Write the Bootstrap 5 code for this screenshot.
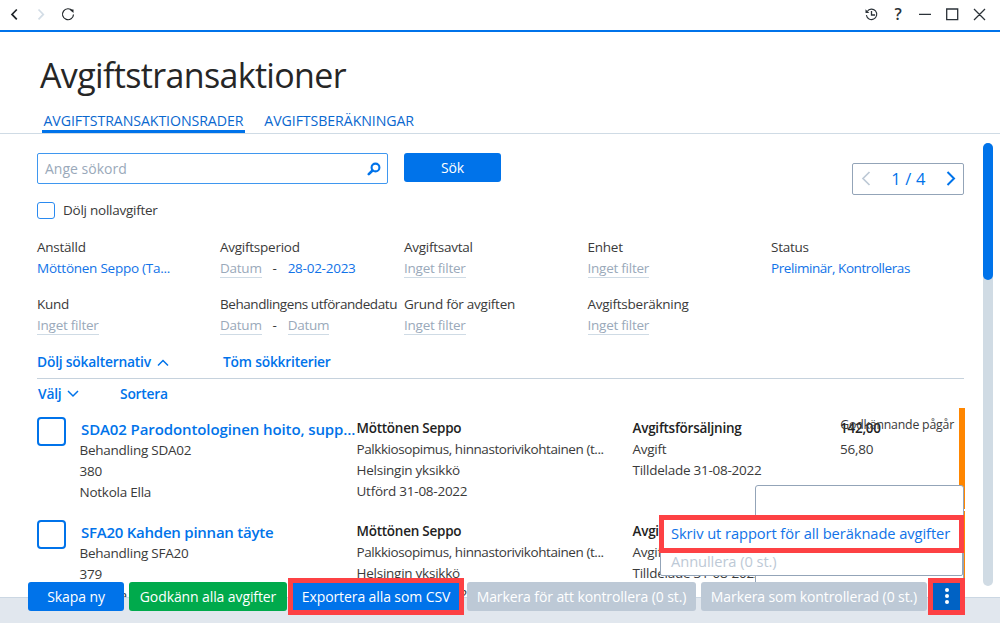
<!DOCTYPE html>
<html lang="sv">
<head>
<meta charset="utf-8">
<meta name="viewport" content="width=device-width, initial-scale=1">
<title>Avgiftstransaktioner</title>
<link href="https://cdn.jsdelivr.net/npm/bootstrap@5.3.0/dist/css/bootstrap.min.css" rel="stylesheet">
<script src="https://cdn.jsdelivr.net/npm/bootstrap@5.3.0/dist/js/bootstrap.bundle.min.js" defer></script>
<style>
:root{--blue:#0073ea;--grey:#9aa9ba;--line:#cfdbe5;--red:#fd4144}
body{font-family:"Open Sans","Noto Sans",sans-serif;font-size:13.5px;letter-spacing:-.25px;line-height:20px;color:#3a3a3a;width:1000px;height:623px;overflow:hidden;background:#fff}
.titlebar{height:32px;border-bottom:2px solid var(--blue);padding:0 13px 2px 7px}
.titlebar svg{display:block}
h1{font-size:34px;line-height:44px;color:#262626;font-weight:400;margin:21px 0 1px 40px;letter-spacing:-.65px}
.tabs{border-bottom:1px solid var(--line);height:36px;padding-left:42px;gap:18px}
.tabs .nav-link{color:#0a68cf;padding:11px 1.5px 0;height:35px;line-height:23px;font-size:14.2px;letter-spacing:-.1px;border-bottom:3px solid transparent;white-space:nowrap}
.tabs .nav-link.active{border-color:var(--blue)}
.page-area{height:463px;overflow:hidden;position:relative;padding:19px 36px 0 37px}
.search{width:351px;height:31px;border:1px solid #3f97ef!important;border-radius:2px;padding:0 6px 0 7px;font-size:14px;letter-spacing:0;color:var(--grey)}
.btn{--bs-btn-border-radius:3px;--bs-btn-padding-y:0;--bs-btn-padding-x:0;--bs-btn-font-size:14px;height:29px;line-height:29px;border:0;white-space:nowrap;letter-spacing:-.1px}
.btn-blue,.btn-blue:hover{background:var(--blue);color:#fff}
.pager{width:112px;height:32px;margin-top:10px;border:1px solid #93a4b8;border-radius:2px;color:var(--blue);font-size:16.5px;letter-spacing:.2px;padding:0 6px 0 7px}
.box-sm{width:18px;height:17px;border:1.5px solid #2a8af0;border-radius:3px}
.box-lg{width:29px;height:29px;border:2px solid var(--blue);border-radius:4px;margin:9px 14px 0 0;flex:none}
.filters{display:grid;grid-template-columns:183px 184px 183.5px 183.5px 1fr;row-gap:15px;margin-top:17px}
.filters>div{white-space:nowrap}
.tight{letter-spacing:-.43px}
.val{height:22px;display:flex;line-height:23px;color:#1173e8}
.empty{color:var(--grey);border-bottom:1px solid var(--line);height:21px}
.dash{width:26px;text-align:center;color:#3a3a3a}
.act{color:var(--blue);font-weight:600;font-size:13.8px;letter-spacing:-.2px}
.options{height:43px;padding-top:16px;border-bottom:1px solid #c6d2dd}
.item{height:103px;position:relative;display:grid;grid-template-columns:42.5px 277px 276px 207.5px 1fr;white-space:nowrap;line-height:21px}
.item::after{content:"";position:absolute;right:-1px;top:0;width:6px;height:101px;background:#ff8600}
.item .info{padding-top:10px}
.item .ttl{color:var(--blue);font-weight:600;font-size:15px;line-height:22px;height:21.5px;padding-left:1.5px;letter-spacing:-.24px}
.item .ttl.wide{letter-spacing:-.1px}
.item b{color:#222;font-weight:600;display:block}
.state{position:absolute;right:10px;top:6px;font-size:12.3px;letter-spacing:-.2px}
.scroll{position:absolute;left:983px;top:9px;width:10px;height:443px;border-radius:5px;background:#d0dbe4}
.scroll div{height:137px;border-radius:5px;background:var(--blue)}
.bar{height:27px;background:#e1e7ee;border-top:1px solid #cbd7e3;position:relative;z-index:3;padding-left:28px}
.bar .btn{margin-top:-16px}
.btn-green,.btn-green:hover{background:#00aa4c;color:#fff}
.bar .btn-off{background:#bdc9d6;color:#fff;opacity:1}
.bar .framed{height:37px;margin:-20px 0 0 1px;border:5px solid var(--red);border-radius:0;line-height:27px}
.pop{position:absolute;z-index:2;background:#fff;border:1px solid #93a4b8}
.p1{left:755px;top:351px;width:209px;height:120px;border-width:1.5px;border-radius:3px}
.p2{left:660px;top:381px;width:303px;height:61px;border-radius:2px;font-size:14.7px;letter-spacing:-.08px;white-space:nowrap}
.hot{margin:-1px -2px 0;height:38px;border:5px solid var(--red);background:#fff;color:#1173e8;padding:0 7px;line-height:26px}
.dim{color:#bdc9d6;padding-left:10px;line-height:17px}
</style>
</head>
<body>
<header class="titlebar d-flex align-items-center justify-content-between">
  <svg width="80" height="28" viewBox="7 0 80 28" fill="none" stroke="#1f2428" stroke-width="1.700"><path d="M16.800 9.500 12 14.400l4.800 4.900"/><path d="m38.500 9.500 4.800 4.900-4.800 4.900" stroke="#d3dde6"/><path d="M72.300 10.800a5.500 5.500 0 1 0 1.200 3.700" stroke-width="1.200"/><path d="M69.500 9.500h4V13z" fill="#1f2428" stroke="none"/></svg>
  <svg width="124" height="28" viewBox="863 0 124 28" fill="none" stroke="#2b3238" stroke-width="1.300"><path d="M867.200 11.500a5.200 5.200 0 1 1-.8 3.600" stroke-width="1.100"/><path d="M865.500 9.300v3.800h3.800z" fill="#2b3238" stroke="none"/><path d="M871.500 11v4h3.600"/><text x="894.500" y="20" font-size="16" font-weight="600" fill="#2b3238" stroke="none">?</text><path d="M919 14.400h12M946.700 9h11v10.600h-11zM974 9l11 11M985 9l-11 11"/></svg>
</header>
<h1>Avgiftstransaktioner</h1>
<nav class="nav tabs flex-nowrap">
  <a class="nav-link active">AVGIFTSTRANSAKTIONSRADER</a>
  <a class="nav-link">AVGIFTSBERÄKNINGAR</a>
</nav>
<main class="page-area">
  <div class="d-flex align-items-start">
    <div class="search d-flex align-items-center justify-content-between"><span>Ange sökord</span>
      <svg width="15" height="15" viewBox="0 0 15 15" fill="none" stroke="#0073ea"><circle cx="9.500" cy="6.500" r="3.900" stroke-width="2.100"/><path d="M6.500 9.500 2.800 13.200" stroke-width="2.600" stroke-linecap="round"/></svg>
    </div>
    <button class="btn btn-blue ms-3" style="width:97px">Sök</button>
    <div class="pager d-flex align-items-center justify-content-between ms-auto">
      <svg width="12" height="16" viewBox="0 0 12 16" fill="none" stroke="#bdc9d6" stroke-width="1.700"><path d="M9.500 1 3 7.500l6.500 6.500"/></svg><span>1 / 4</span>
      <svg width="12" height="16" viewBox="0 0 12 16" fill="none" stroke="#0073ea" stroke-width="2"><path d="M2.500 1 9 7.500l-6.500 6.500"/></svg>
    </div>
  </div>
  <div class="d-flex align-items-center" style="height:20px;margin-top:5px"><span class="box-sm me-2"></span><span>Dölj nollavgifter</span></div>
  <section class="filters">
    <div>Anställd<div class="val">Möttönen Seppo (Ta...</div></div>
    <div>Avgiftsperiod<div class="val"><span class="empty">Datum</span><span class="dash">-</span>28-02-2023</div></div>
    <div>Avgiftsavtal<div class="val"><span class="empty">Inget filter</span></div></div>
    <div>Enhet<div class="val"><span class="empty">Inget filter</span></div></div>
    <div>Status<div class="val tight">Preliminär, Kontrolleras</div></div>
    <div>Kund<div class="val"><span class="empty">Inget filter</span></div></div>
    <div><span class="tight">Behandlingens utförandedatu</span><div class="val"><span class="empty">Datum</span><span class="dash">-</span><span class="empty">Datum</span></div></div>
    <div>Grund för avgiften<div class="val"><span class="empty">Inget filter</span></div></div>
    <div>Avgiftsberäkning<div class="val"><span class="empty">Inget filter</span></div></div>
  </section>
  <div class="act options d-flex"><span style="width:186px">Dölj sökalternativ <svg width="12" height="9" viewBox="0 0 12 9" fill="none" stroke="#0073ea" stroke-width="1.500" style="margin-left:3px"><path d="m1 6.500 5-5 5 5"/></svg></span><span>Töm sökkriterier</span></div>
  <div class="act d-flex" style="height:29px;padding:5px 0 0 1px"><span style="width:82px">Välj <svg width="12" height="10" viewBox="0 0 12 10" fill="none" stroke="#0073ea" stroke-width="1.500" style="margin-left:2px"><path d="m1 1 5 5 5-5"/></svg></span><span>Sortera</span></div>
  <article class="item">
    <span class="box-lg"></span>
    <div class="info"><div class="ttl wide">SDA02 Parodontologinen hoito, supp...</div>Behandling SDA02<br>380<br>Notkola Ella</div>
    <div class="info"><b>Möttönen Seppo</b><span class="tight">Palkkiosopimus, hinnastorivikohtainen (t...</span><br>Helsingin yksikkö<br>Utförd 31-08-2022</div>
    <div class="info"><b>Avgiftsförsäljning</b>Avgift<br>Tilldelade 31-08-2022</div>
    <div class="info"><b>142,00</b>56,80</div>
    <span class="state">Godkännande pågår</span>
  </article>
  <article class="item">
    <span class="box-lg"></span>
    <div class="info"><div class="ttl">SFA20 Kahden pinnan täyte</div>Behandling SFA20<br>379<br>Notkola Ella</div>
    <div class="info"><b>Möttönen Seppo</b><span class="tight">Palkkiosopimus, hinnastorivikohtainen (t...</span><br>Helsingin yksikkö<br>Utförd 31-08-2022</div>
    <div class="info"><b>Avgiftsförsäljning</b>Avgift<br>Tilldelade 31-08-2022</div>
  </article>
  <div class="scroll"><div></div></div>
  <div class="pop p1"></div>
  <div class="pop p2"><div class="hot">Skriv ut rapport för all beräknade avgifter</div><div class="dim">Annullera (0 st.)</div></div>
</main>
<footer class="bar d-flex align-items-start">
  <button class="btn btn-blue" style="width:96px">Skapa ny</button>
  <button class="btn btn-green" style="width:158px;margin-left:5px">Godkänn alla avgifter</button>
  <button class="btn btn-blue framed" style="width:176px">Exportera alla som CSV</button>
  <button class="btn btn-off" style="width:229px;margin-left:3px" disabled>Markera för att kontrollera (0 st.)</button>
  <button class="btn btn-off" style="width:226px;margin-left:5px" disabled>Markera som kontrollerad (0 st.)</button>
  <button class="btn framed" style="width:37px;background:#0062c4" aria-label="Mer"><svg class="d-block mx-auto" width="6" height="20" viewBox="0 0 6 20" fill="#fff"><circle cx="3" cy="3" r="2"/><circle cx="3" cy="9" r="2"/><circle cx="3" cy="15" r="2"/></svg></button>
</footer>
</body>
</html>
